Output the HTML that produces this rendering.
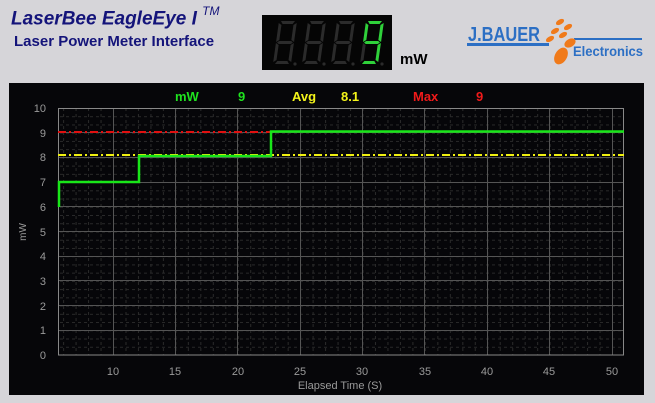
<!DOCTYPE html>
<html><head><meta charset="utf-8"><style>
html,body{margin:0;padding:0}
body{width:655px;height:403px;background:#d6d5d9;position:relative;overflow:hidden;font-family:"Liberation Sans",sans-serif}
.t{position:absolute;white-space:nowrap}
</style></head><body>
<div class="t" style="left:11px;top:6px;font-size:19px;font-weight:bold;font-style:italic;color:#14147a">LaserBee EagleEye I <sup style="font-size:12px;font-weight:normal;position:relative;top:-2px">TM</sup></div>
<div class="t" style="left:14px;top:33px;font-size:15px;font-weight:bold;color:#14147a">Laser Power Meter Interface</div>
<div class="t" style="left:400px;top:51px;font-size:15px;font-weight:bold;color:#000">mW</div>

<svg style="position:absolute;left:262px;top:15px" width="130" height="55">
<rect width="130" height="55" fill="#050505"/>
<defs>
<polygon id="sa" points="2,0 16,0 14,3 4,3"/>
<polygon id="sf" points="0,2 3,4 3,19 0,21"/>
<polygon id="sb" points="18,2 18,21 15,19 15,4"/>
<polygon id="sg" points="1,21.5 3,20 15,20 17,21.5 15,23 3,23"/>
<polygon id="se" points="0,22 3,24 3,39 0,41"/>
<polygon id="sc" points="18,22 18,41 15,39 15,24"/>
<polygon id="sd" points="4,40 14,40 16,43 2,43"/>
<g id="dg"><use href="#sa"/><use href="#sf"/><use href="#sb"/><use href="#sg"/><use href="#se"/><use href="#sc"/><use href="#sd"/></g>
</defs>
<g fill="#2b2b2b">
<g transform="translate(17,6) skewX(-8)"><use href="#dg"/></g>
<g transform="translate(46,6) skewX(-8)"><use href="#dg"/></g>
<g transform="translate(75,6) skewX(-8)"><use href="#dg"/></g>
<g transform="translate(104,6) skewX(-8)"><use href="#se"/></g>
<circle cx="33" cy="49" r="1.6"/><circle cx="62" cy="49" r="1.6"/><circle cx="91" cy="49" r="1.6"/><circle cx="120" cy="49" r="1.6"/>
</g>
<g fill="#2fd13a" transform="translate(104,6) skewX(-8)">
<use href="#sa"/><use href="#sf"/><use href="#sb"/><use href="#sg"/><use href="#sc"/><use href="#sd"/>
</g>
</svg>

<svg style="position:absolute;left:460px;top:14px" width="190" height="60">
<text x="8" y="27" font-family="Liberation Sans" font-size="20" font-weight="bold" fill="#2c6fc4" textLength="72" lengthAdjust="spacingAndGlyphs">J.BAUER</text>
<rect x="7" y="29" width="82" height="3" fill="#2c6fc4"/>
<rect x="114" y="24" width="68" height="2" fill="#2c6fc4"/>
<text x="113" y="42" font-family="Liberation Sans" font-size="14" font-weight="bold" fill="#2c6fc4" textLength="70" lengthAdjust="spacingAndGlyphs">Electronics</text>
<g fill="#f07a1a">
<ellipse cx="100" cy="8" rx="4.5" ry="2.5" transform="rotate(-30 100 8)"/>
<ellipse cx="108" cy="13" rx="4.5" ry="2.5" transform="rotate(-30 108 13)"/>
<ellipse cx="95" cy="17" rx="4.5" ry="2.5" transform="rotate(-30 95 17)"/>
<ellipse cx="103" cy="21" rx="4.5" ry="2.5" transform="rotate(-30 103 21)"/>
<ellipse cx="90" cy="25" rx="4.5" ry="2.5" transform="rotate(-30 90 25)"/>
<ellipse cx="110" cy="29" rx="6" ry="4" transform="rotate(-30 110 29)"/>
<ellipse cx="101" cy="42" rx="6" ry="9" transform="rotate(30 101 42)"/>
</g>
</svg>

<svg style="position:absolute;left:0;top:0" width="655" height="403">
<defs>
<pattern id="mv" x="63.1" y="0" width="12.475" height="403" patternUnits="userSpaceOnUse">
<line x1="0.5" y1="0" x2="0.5" y2="403" stroke="#2a2a2a" stroke-width="1" stroke-dasharray="3,3"/>
</pattern>
<pattern id="mh" x="0" y="108" width="655" height="8.233" patternUnits="userSpaceOnUse">
<line x1="0" y1="0.5" x2="655" y2="0.5" stroke="#2a2a2a" stroke-width="1" stroke-dasharray="3,3"/>
</pattern>
</defs>
<rect x="9" y="83" width="635" height="312" fill="#060609"/>
<rect x="58" y="108" width="566" height="247" fill="url(#mv)"/>
<rect x="58" y="108" width="566" height="247" fill="url(#mh)"/>
<g stroke="#555" stroke-width="1">
<line x1="113.5" y1="108" x2="113.5" y2="355"/><line x1="175.5" y1="108" x2="175.5" y2="355"/><line x1="237.5" y1="108" x2="237.5" y2="355"/><line x1="300.5" y1="108" x2="300.5" y2="355"/><line x1="362.5" y1="108" x2="362.5" y2="355"/><line x1="424.5" y1="108" x2="424.5" y2="355"/><line x1="487.5" y1="108" x2="487.5" y2="355"/><line x1="549.5" y1="108" x2="549.5" y2="355"/><line x1="612.5" y1="108" x2="612.5" y2="355"/>
<line x1="58" y1="330.5" x2="624" y2="330.5"/><line x1="58" y1="305.5" x2="624" y2="305.5"/><line x1="58" y1="280.5" x2="624" y2="280.5"/><line x1="58" y1="256.5" x2="624" y2="256.5"/><line x1="58" y1="231.5" x2="624" y2="231.5"/><line x1="58" y1="206.5" x2="624" y2="206.5"/><line x1="58" y1="182.5" x2="624" y2="182.5"/><line x1="58" y1="157.5" x2="624" y2="157.5"/><line x1="58" y1="132.5" x2="624" y2="132.5"/>
</g>
<rect x="58.5" y="108.5" width="565" height="246.5" fill="none" stroke="#888" stroke-width="1"/>
<line x1="58" y1="132" x2="270" y2="132" stroke="#e01010" stroke-width="2" stroke-dasharray="8,3,2,3"/>
<line x1="58" y1="155" x2="624" y2="155" stroke="#f0f010" stroke-width="2" stroke-dasharray="8,3,2,3"/>
<polyline points="59,207 59,182 139,182 139,156 271,156 271,131.5 624,131.5" fill="none" stroke="#19e619" stroke-width="2.5"/>
<g font-family="Liberation Sans" font-size="11" fill="#9a9a9a" text-anchor="end">
<text x="46" y="359">0</text><text x="46" y="334">1</text><text x="46" y="310">2</text><text x="46" y="285">3</text><text x="46" y="260">4</text><text x="46" y="236">5</text><text x="46" y="211">6</text><text x="46" y="186">7</text><text x="46" y="161">8</text><text x="46" y="137">9</text><text x="46" y="112">10</text>
</g>
<g font-family="Liberation Sans" font-size="11" fill="#9a9a9a" text-anchor="middle">
<text x="113" y="375">10</text><text x="175" y="375">15</text><text x="238" y="375">20</text><text x="300" y="375">25</text><text x="362" y="375">30</text><text x="425" y="375">35</text><text x="487" y="375">40</text><text x="549" y="375">45</text><text x="612" y="375">50</text>
<text x="340" y="389">Elapsed Time (S)</text>
<text x="26" y="232" transform="rotate(-90 26 232)" font-size="10">mW</text>
</g>
<g font-family="Liberation Sans" font-size="13" font-weight="bold">
<text x="175" y="101" fill="#1fe21f">mW</text><text x="238" y="101" fill="#1fe21f">9</text>
<text x="292" y="101" fill="#f4f41a">Avg</text><text x="341" y="101" fill="#f4f41a">8.1</text>
<text x="413" y="101" fill="#f01a1a">Max</text><text x="476" y="101" fill="#f01a1a">9</text>
</g>
</svg>
</body></html>
